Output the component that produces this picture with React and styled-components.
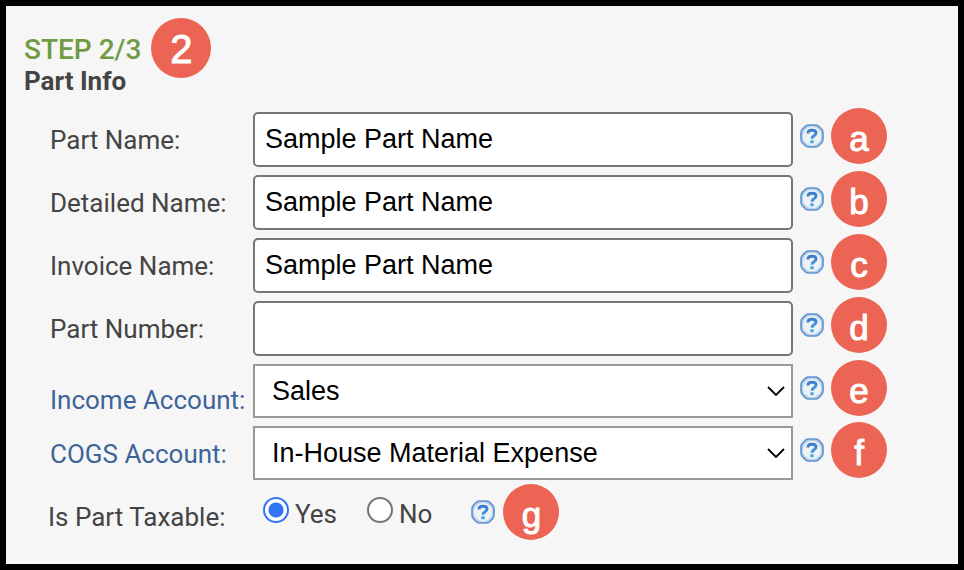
import React, { useState } from "react";
import styled, { createGlobalStyle } from "styled-components";

const GlobalStyle = createGlobalStyle`
  *, *::before, *::after { box-sizing: border-box; }
  body { margin: 0; background: #f6f6f6; }
`;

const Panel = styled.main`
  min-height: 100vh;
  padding: 12px 69px 12px 18px;
  border: 6px solid #000;
  background: #f6f6f6;
  color: #444;
  font-family: Roboto, "Liberation Sans", sans-serif;
  font-size: 26px;
  line-height: 30px;
`;

const Header = styled.header`
  display: flex;
  align-items: center;
  gap: 10px;
  height: 48px;
`;

const Step = styled.h1`
  margin: 0;
  padding-top: 16px;
  color: #719b42;
  font-size: 28px;
  font-weight: 500;
  line-height: 32px;
`;

const Title = styled.h2`
  margin: 0 0 16px;
  font-size: 26px;
  font-weight: 700;
`;

const Form = styled.form`
  display: flex;
  flex-direction: column;
  gap: 8px;
  padding-left: 26px;
`;

const Row = styled.div`
  display: grid;
  grid-template-columns: 203px 1fr auto 58px;
  column-gap: 7px;
  align-items: start;
`;

const Label = styled.label`
  margin-right: -7px;
  padding-top: ${(p) => (p.$low ? 21 : 13)}px;
  color: ${(p) => (p.$linked ? "#3d6599" : "inherit")};
  white-space: nowrap;
`;

const FieldCell = styled.div`
  position: relative;
  margin-left: -7px;
`;

const TextInput = styled.input`
  display: block;
  width: 100%;
  height: 55px;
  padding: 0 10px;
  border: 2px solid #767676;
  border-radius: 5px;
  background: #fff;
  color: #000;
  font: 27px "Liberation Sans", Arial, sans-serif;
`;

const Select = styled.select`
  display: block;
  width: 100%;
  height: 54px;
  padding: 0 40px 0 17px;
  border: 2px solid #999;
  border-radius: 0;
  appearance: none;
  background: #fff;
  color: #000;
  font: 27px "Liberation Sans", Arial, sans-serif;
`;

const Chevron = styled.svg`
  position: absolute;
  top: 21px;
  right: 7px;
  pointer-events: none;
`;

const HelpButton = styled.button`
  display: block;
  width: 24px;
  height: 24px;
  margin-top: 12px;
  padding: 0;
  border: 0;
  background: none;
  cursor: pointer;
`;

const Badge = styled.span`
  display: flex;
  flex: none;
  align-items: center;
  justify-content: center;
  width: ${(p) => (p.$large ? 60 : 56)}px;
  height: ${(p) => (p.$large ? 60 : 56)}px;
  margin: ${(p) => (p.$large ? "12px 0 0" : "-4px 0 -3px")};
  padding-top: ${(p) => (p.$large ? 2 : 6)}px;
  border-radius: 50%;
  background: #ec6453;
  color: #fff;
  font-family: "Liberation Sans", Arial, sans-serif;
  font-size: ${(p) => (p.$large ? 40 : 35)}px;
  line-height: 40px;
  -webkit-text-stroke: 1px #fff;
`;

const TaxRow = styled.fieldset`
  display: flex;
  align-items: flex-start;
  height: 54px;
  margin: 0;
  padding: 0;
  border: 0;
`;

const TaxLegend = styled.span`
  width: 205px;
  margin-left: -2px;
  padding-top: 14px;
`;

const Choices = styled.div`
  display: flex;
  gap: 30px;
  padding: 0 39px 0 10px;
`;

const Choice = styled.label`
  display: flex;
  align-items: flex-start;
  gap: 6px;
  padding-top: 11px;
`;

const Radio = styled.input`
  appearance: none;
  width: 26px;
  height: 26px;
  margin: -2px 0 0;
  border: 2px solid #767676;
  border-radius: 50%;
  background: #fff;

  &:checked {
    border-color: #3175f6;
    background: radial-gradient(circle, #3175f6 7px, #fff 8px);
  }
`;

const TaxHints = styled.div`
  display: flex;
  align-items: flex-start;
  gap: 8px;
`;

function Help({ topic }) {
  return (
    <HelpButton type="button" aria-label={`Help: ${topic}`}>
      <svg width="24" height="24" viewBox="0 0 24 24" aria-hidden="true">
        <defs>
          <linearGradient id="mark" gradientUnits="userSpaceOnUse" x1="0" y1="5" x2="0" y2="19">
            <stop offset="0" stopColor="#3d78c9" />
            <stop offset="1" stopColor="#43a9e6" />
          </linearGradient>
        </defs>
        <path
          d="M9 1h6q2 0 3.500 1.200l3.300 3.300Q23 7 23 9v6q0 2-1.200 3.500l-3.300 3.300Q17 23 15 23H9q-2 0-3.500-1.200l-3.300-3.300Q1 17 1 15V9q0-2 1.200-3.500l3.300-3.300Q7 1 9 1z"
          fill="#b9d0ea"
          stroke="#5e92cf"
          strokeWidth="1.600"
        />
        <circle cx="12" cy="12" r="9.200" fill="#eef2f5" />
        <path
          d="M8 9.500V9q0-2.800 4-2.800T16 9q0 1.700-2 2.800-2 1-2 3"
          fill="none"
          stroke="url(#mark)"
          strokeWidth="3"
        />
        <rect x="10.300" y="16.300" width="3.400" height="3" rx="0.500" fill="#43a9e6" />
      </svg>
    </HelpButton>
  );
}

const FIELDS = [
  { id: "part-name", label: "Part Name:", value: "Sample Part Name", mark: "a" },
  { id: "detailed-name", label: "Detailed Name:", value: "Sample Part Name", mark: "b" },
  { id: "invoice-name", label: "Invoice Name:", value: "Sample Part Name", mark: "c" },
  { id: "part-number", label: "Part Number:", value: "", mark: "d" },
  { id: "income", label: "Income Account:", options: ["Sales"], mark: "e", low: true },
  { id: "cogs", label: "COGS Account:", options: ["In-House Material Expense"], mark: "f" },
];

function Field({ id, label, value, options, mark, low }) {
  return (
    <Row>
      <Label htmlFor={id} $linked={Boolean(options)} $low={low}>
        {label}
      </Label>
      <FieldCell>
        {options ? (
          <>
            <Select id={id}>
              {options.map((o) => (
                <option key={o}>{o}</option>
              ))}
            </Select>
            <Chevron width="20" height="12" viewBox="0 0 20 12" aria-hidden="true">
              <path d="M2 2l8 8 8-8" fill="none" stroke="#000" strokeWidth="1.800" />
            </Chevron>
          </>
        ) : (
          <TextInput id={id} type="text" defaultValue={value} />
        )}
      </FieldCell>
      <Help topic={label} />
      <Badge>{mark}</Badge>
    </Row>
  );
}

export default function App() {
  const [taxable, setTaxable] = useState("Yes");
  return (
    <>
      <GlobalStyle />
      <Panel>
        <Header>
          <Step>STEP 2/3</Step>
          <Badge $large>2</Badge>
        </Header>
        <Title>Part Info</Title>
        <Form onSubmit={(e) => e.preventDefault()}>
          {FIELDS.map((f) => (
            <Field key={f.id} {...f} />
          ))}
          <TaxRow aria-labelledby="taxable-label">
            <TaxLegend id="taxable-label">Is Part Taxable:</TaxLegend>
            <Choices>
              {["Yes", "No"].map((v) => (
                <Choice key={v}>
                  <Radio
                    type="radio"
                    name="taxable"
                    checked={taxable === v}
                    onChange={() => setTaxable(v)}
                  />
                  {v}
                </Choice>
              ))}
            </Choices>
            <TaxHints>
              <Help topic="Is Part Taxable" />
              <Badge>g</Badge>
            </TaxHints>
          </TaxRow>
        </Form>
      </Panel>
    </>
  );
}
